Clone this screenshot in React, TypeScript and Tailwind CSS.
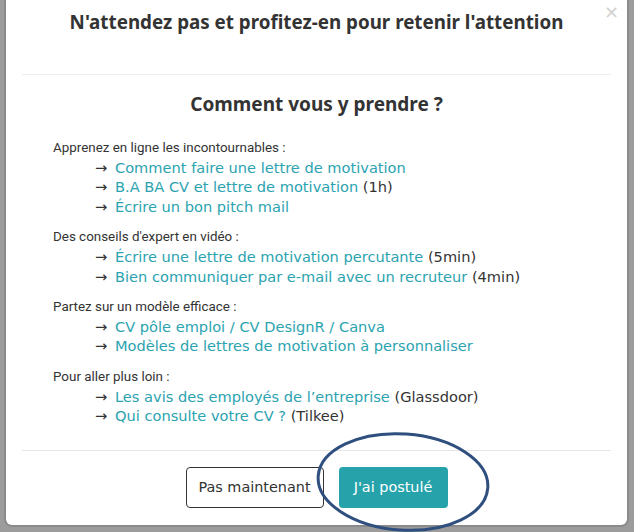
import React from "react";

type Item = { link: string[]; extra?: string };

const sections: { title: string; items: Item[] }[] = [
  {
    title: "Apprenez en ligne les incontournables :",
    items: [
      { link: ["Comment faire une lettre de motivation"] },
      { link: ["B.A BA CV et lettre de motivation"], extra: "(1h)" },
      { link: ["Écrire un bon pitch mail"] },
    ],
  },
  {
    title: "Des conseils d'expert en vidéo :",
    items: [
      { link: ["Écrire une lettre de motivation percutante"], extra: "(5min)" },
      { link: ["Bien communiquer par e-mail avec un recruteur"], extra: "(4min)" },
    ],
  },
  {
    title: "Partez sur un modèle efficace :",
    items: [
      { link: ["CV pôle emploi", "CV DesignR", "Canva"] },
      { link: ["Modèles de lettres de motivation à personnaliser"] },
    ],
  },
  {
    title: "Pour aller plus loin :",
    items: [
      { link: ["Les avis des employés de l’entreprise"], extra: "(Glassdoor)" },
      { link: ["Qui consulte votre CV ?"], extra: "(Tilkee)" },
    ],
  },
];

const wide = { fontFamily: '"DejaVu Sans", Verdana, sans-serif' };
const narrow = { fontFamily: 'Roboto, "DejaVu Sans Condensed", sans-serif' };
const head = { fontFamily: '"Noto Sans", sans-serif' };

const Row = ({ item }: { item: Item }) => (
  <div className="pl-[42px] text-[14.6px] leading-[19.6px] h-[19.6px] whitespace-nowrap" style={wide}>
    <span className="inline-block w-[20px] text-[#333]">→</span>
    {item.link.map((l, i) => (
      <React.Fragment key={i}>
        {i > 0 && <span className="text-[#2ba3b0]"> / </span>}
        <a className="text-[#2ba3b0]">{l}</a>
      </React.Fragment>
    ))}
    {item.extra && <span className="text-[#333]"> {item.extra}</span>}
  </div>
);

export default function App() {
  return (
    <div className="w-[634px] h-[532px] bg-[#9c9c9c] overflow-hidden relative">
      <div className="ml-[4px] w-[625px] h-[527px] bg-white border-l-2 border-r-2 border-b-2 border-[#8a8a8a] rounded-b-[8px] flex flex-col">
        <div className="relative h-[74px] pt-[8px] text-center">
          <h1 className="text-[18.8px] font-bold text-[#333] leading-[28px]" style={head}>
            N'attendez pas et profitez-en pour retenir l'attention
          </h1>
          <span className="absolute right-[8px] top-[3px] text-[18px] text-[#d0d0d0] leading-[18px]" style={wide}>
            ×
          </span>
        </div>
        <div className="mx-[16px] h-px bg-[#eee]" />
        <div className="flex-1 px-[47px] pt-[15px] leading-[19.6px]">
          <h2 className="text-center text-[19px] font-bold text-[#333] leading-[28px] mb-[20px]" style={head}>
            Comment vous y prendre ?
          </h2>
          <div className="flex flex-col gap-[11px]">
            {sections.map((s, i) => (
              <div key={i}>
                <div className="text-[#333] text-[13.4px] h-[19.6px]" style={narrow}>
                  {s.title}
                </div>
                {s.items.map((it, j) => (
                  <Row key={j} item={it} />
                ))}
              </div>
            ))}
          </div>
        </div>
        <div className="mx-[16px] h-px bg-[#e5e5e5]" />
        <div className="h-[74px] flex items-start justify-center gap-[15px] pt-[16px] text-[14.4px]" style={wide}>
          <button className="h-[41px] w-[138px] border border-[#333] rounded-[4px] bg-white text-[#333]">
            Pas maintenant
          </button>
          <button className="h-[41px] w-[109px] rounded-[4px] bg-[#26a2aa] text-white">J'ai postulé</button>
        </div>
      </div>
      <svg className="absolute left-[314px] top-[430px]" width="178" height="104" viewBox="0 0 178 104">
        <ellipse cx="89" cy="52" rx="85" ry="48" fill="none" stroke="#2f4f7f" strokeWidth="3" transform="rotate(4 89 52)" />
      </svg>
    </div>
  );
}
